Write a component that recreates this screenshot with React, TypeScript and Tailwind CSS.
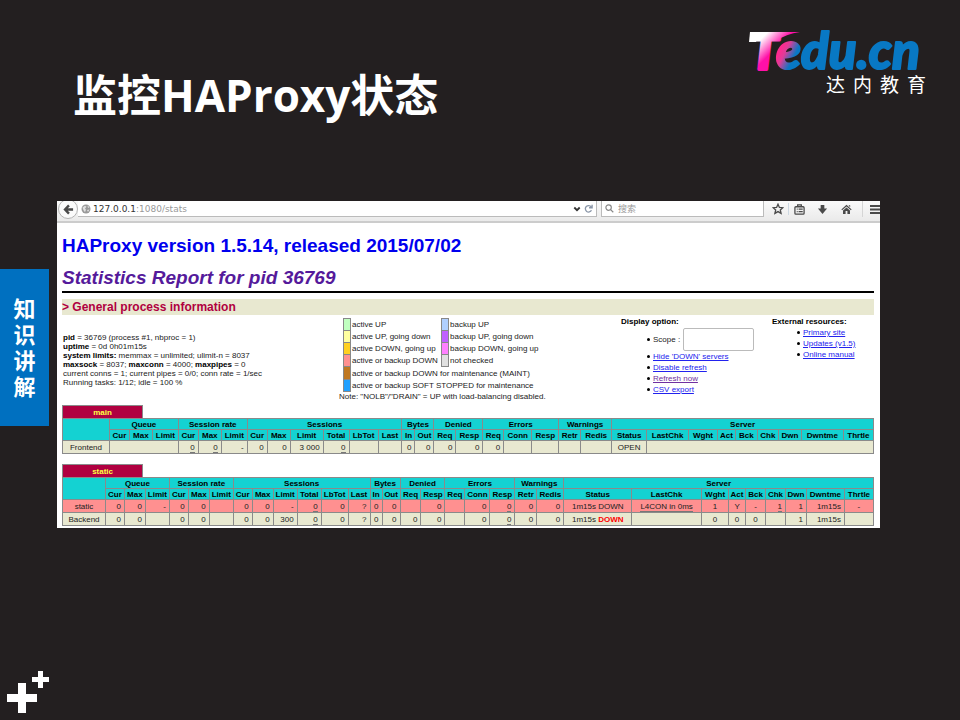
import React from "react";

type Cell = { t?: string; span?: number; align?: "l" | "c" | "r"; u?: boolean; alert?: string };

const groups: [string, number][] = [
  ["Queue", 3],
  ["Session rate", 3],
  ["Sessions", 6],
  ["Bytes", 2],
  ["Denied", 2],
  ["Errors", 3],
  ["Warnings", 2],
  ["Server", 9],
];

const heads = [
  "Cur", "Max", "Limit", "Cur", "Max", "Limit", "Cur", "Max", "Limit", "Total", "LbTot", "Last",
  "In", "Out", "Req", "Resp", "Req", "Conn", "Resp", "Retr", "Redis", "Status", "LastChk",
  "Wght", "Act", "Bck", "Chk", "Dwn", "Dwntme", "Thrtle",
];

const mainCols = [47, 20, 23, 26, 20, 23, 26, 20, 23, 33, 26, 29, 24, 13, 19, 22, 27, 21, 28, 27, 22, 31, 35, 42, 29, 18, 22, 21, 23, 42, 30];
const staticCols = [43, 19, 21, 24, 19, 21, 24, 19, 21, 24, 24, 27, 22, 12, 18, 21, 24, 20, 25, 25, 22, 27, 68, 70, 27, 17, 20, 20, 21, 38, 29];

const n = (t = ""): Cell => ({ t });
const u = (t: string): Cell => ({ t, u: true });
const c = (t = ""): Cell => ({ t, align: "c" });

const frontend: Cell[] = [
  { span: 3 }, u("0"), u("0"), n("-"), n("0"), n("0"), n("3 000"), u("0"), n(), n(),
  n("0"), n("0"), n("0"), n("0"), n("0"), n(), n(), n(), n(), c("OPEN"), { span: 8 },
];
const staticRow: Cell[] = [
  n("0"), n("0"), n("-"), n("0"), n("0"), n(), n("0"), n("0"), n("-"), u("0"), n("0"), n("?"),
  n("0"), n("0"), n(), n("0"), n(), n("0"), u("0"), n("0"), n("0"), c("1m15s DOWN"),
  { t: "L4CON in 0ms", u: true, align: "c" }, c("1"), c("Y"), c("-"), u("1"), n("1"), n("1m15s"), c("-"),
];
const backend: Cell[] = [
  n("0"), n("0"), n(), n("0"), n("0"), n(), n("0"), n("0"), n("300"), u("0"), n("0"), n("?"),
  n("0"), n("0"), n("0"), n("0"), n(), n("0"), u("0"), n("0"), n("0"),
  { t: "1m15s ", alert: "DOWN", align: "c" }, n(), c("0"), c("0"), c("0"), n(), n("1"), n("1m15s"), n(),
];

function ProxyTable({ name, cols, rows }: { name: string; cols: number[]; rows: { label: string; bg: string; cells: Cell[] }[] }) {
  const total = cols.reduce((a, b) => a + b, 0);
  return (
    <table className="w-full table-fixed border-collapse whitespace-nowrap text-center text-[8px] leading-[9px] text-[#222]">
      <caption className="text-left">
        <a href={"#" + name} className="block h-[13px] w-[10%] border border-b-0 border-[#8a8a8a] bg-[#b00040] text-center font-bold leading-[13px] text-[#ffff40]">
          {name}
        </a>
      </caption>
      <colgroup>
        {cols.map((w, i) => (
          <col key={i} style={{ width: (w / total) * 100 + "%" }} />
        ))}
      </colgroup>
      <thead className="bg-[#14d2d2] text-black">
        <tr className="h-[11px]">
          <th rowSpan={2} className="border border-[#8a8a8a] p-0"></th>
          {groups.map(([g, s]) => (
            <th key={g} colSpan={s} className="border border-[#8a8a8a] p-0">{g}</th>
          ))}
        </tr>
        <tr className="h-[11px]">
          {heads.map((h, i) => (
            <th key={i} className="border border-[#8a8a8a] p-0">
              <span className="flex justify-center">{h}</span>
            </th>
          ))}
        </tr>
      </thead>
      <tbody>
        {rows.map((r) => (
          <tr key={r.label} className={"h-[13px] " + r.bg}>
            <th className="border border-[#8a8a8a] p-0 font-normal">{r.label}</th>
            {r.cells.map((x, i) => (
              <td
                key={i}
                colSpan={x.span || 1}
                className={"border border-[#8a8a8a] py-0 " + (x.align === "c" ? "px-0 text-center" : "pl-0 pr-[3px] text-right")}
              >
                {x.u ? <span className="border-b border-[#777]">{x.t}</span> : x.t}
                {x.alert && <b className="text-[#f00]">{x.alert}</b>}
              </td>
            ))}
          </tr>
        ))}
      </tbody>
    </table>
  );
}

const legend: [string, string, string?, string?][] = [
  ["bg-[#c0ffc0]", "active UP", "bg-[#b0d0ff]", "backup UP"],
  ["bg-[#ffffa0]", "active UP, going down", "bg-[#c060ff]", "backup UP, going down"],
  ["bg-[#ffd020]", "active DOWN, going up", "bg-[#ff80ff]", "backup DOWN, going up"],
  ["bg-[#ff9090]", "active or backup DOWN", "bg-[#e0e0e0]", "not checked"],
  ["bg-[#c07820]", "active or backup DOWN for maintenance (MAINT)"],
  ["bg-[#20a0ff]", "active or backup SOFT STOPPED for maintenance"],
];

function Bullet({ children }: { children: React.ReactNode }) {
  return (
    <li className="flex items-center gap-[3px]">
      <span className="size-[3px] shrink-0 rounded-full bg-black" />
      {children}
    </li>
  );
}

function Toolbar() {
  const btn = "flex size-4 items-center justify-center text-[#4a4a4a]";
  return (
    <div className="flex h-[22px] items-start overflow-hidden border-b-2 border-[#ccc] bg-gradient-to-b from-[#fafafa] to-[#eaeaea]">
      <button aria-label="Back" className="-mt-[2px] ml-px flex size-5 shrink-0 items-center justify-center rounded-full border border-[#b4b4b4] bg-[#fbfbfb]">
        <svg viewBox="0 0 12 12" className="size-[11px]" fill="none" stroke="#4a4a4a" strokeWidth="2.6">
          <path d="M6.500 1.500 2.200 6l4.300 4.500M2.500 6H11" />
        </svg>
      </button>
      <div className="flex h-4 min-w-0 flex-1 items-center border-b border-r border-[#bbb] bg-white pl-[3px] pr-[3px] text-[9px] leading-[14px] [font-family:'DejaVu_Sans',sans-serif]">
        <svg viewBox="0 0 10 10" className="size-[10px] shrink-0">
          <circle cx="5" cy="5" r="4.5" fill="#999" />
          <path d="M1.500 3.500 4 1.800l1.500 1L4 4.500l1 1.200-1 2.500-1.500-2zM6.500 1.500l2 1.800L7 4zM6 6l2.500-.5L7 8z" fill="#e0e0e0" />
        </svg>
        <label htmlFor="address" className="ml-[2px] text-[#333]">127.0.0.1</label>
        <input id="address" defaultValue=":1080/stats" className="min-w-0 flex-1 bg-transparent text-[#999] outline-none" />
        <button aria-label="History" className="mr-[3px]">
          <svg viewBox="0 0 8 8" className="size-2" fill="none" stroke="#333" strokeWidth="1.8">
            <path d="m1.300 2.500 2.700 2.700 2.700-2.700" />
          </svg>
        </button>
        <button aria-label="Reload">
          <svg viewBox="0 0 10 10" className="size-[9px]" fill="none" stroke="#8a96a8" strokeWidth="1.5">
            <path d="M8 3.200A3.600 3.600 0 1 0 8.300 7M9 .8v3.400H5.600" />
          </svg>
        </button>
      </div>
      <div className="ml-1 flex h-4 w-[163px] shrink-0 items-center gap-1 border border-t-0 border-[#bbb] bg-white pl-[3px]">
        <svg viewBox="0 0 10 10" className="size-[9px]" fill="none" stroke="#888" strokeWidth="1.3">
          <circle cx="4" cy="4" r="3" />
          <path d="m6.200 6.200 3 3" />
        </svg>
        <input aria-label="搜索" placeholder="搜索" className="min-w-0 flex-1 bg-transparent text-[9px] leading-[14px] outline-none placeholder:text-[#999] [font-family:'Noto_Sans_CJK_SC',sans-serif]" />
      </div>
      <div className="flex w-[116px] shrink-0 items-center justify-between pl-[6px]">
        <div className="flex items-center gap-[2px]">
          <button aria-label="Bookmark" className={btn}>
            <svg viewBox="0 0 12 12" className="size-3" fill="none" stroke="currentColor" strokeWidth="1.3">
              <path d="m6 1.200 1.400 3.200 3.500.3-2.600 2.300.8 3.400L6 8.600l-3.100 1.800.8-3.400L1.100 4.700l3.500-.3z" />
            </svg>
          </button>
          <span className="h-3 w-px bg-[#cdd8e2]" />
          <button aria-label="Reading list" className={btn}>
            <svg viewBox="0 0 12 12" className="size-[11px]" fill="none" stroke="currentColor" strokeWidth="1.4">
              <rect x="1" y="3" width="10" height="8" rx="1" />
              <path d="M4 3V1h4v2M3 5.600h1M5 5.600h4.500M3 8.200h1M5 8.200h4.500" />
            </svg>
          </button>
        </div>
        <button aria-label="Downloads" className={btn}>
          <svg viewBox="0 0 12 12" className="size-[11px]" fill="currentColor">
            <path d="M4 1h4v4h3L6 11 1 5h3z" />
          </svg>
        </button>
        <button aria-label="Home" className={btn}>
          <svg viewBox="0 0 12 12" className="size-[11px]" fill="currentColor">
            <path d="M6 .8 11.600 6l-.8.8L6 2.600 1.200 6.800.4 6zM2.200 7 6 3.700 9.800 7v4H7V7.500H5V11H2.200zM8.500 1.300h1.500v2l-1.500-1.200z" />
          </svg>
        </button>
        <span className="h-4 w-px bg-[#d5d5d5]" />
        <button aria-label="Menu" className="flex h-4 w-[10px] items-center">
          <svg viewBox="0 0 10 9" className="h-[9px] w-[10px]" fill="#4a4a4a">
            <path d="M0 0h10v2H0zM0 3.500h10v2H0zM0 7h10v2H0z" />
          </svg>
        </button>
      </div>
    </div>
  );
}

function ProcessInfo() {
  return (
    <div className="grid grid-cols-[minmax(0,277fr)_minmax(0,282fr)_minmax(0,151fr)_minmax(0,102fr)] whitespace-nowrap pt-px text-[8px] leading-[9px] text-[#222]">
      <div className="pl-px pt-[17px]">
        <p><b className="text-black">pid</b> = 36769 (process #1, nbproc = 1)</p>
        <p><b className="text-black">uptime</b> = 0d 0h01m15s</p>
        <p><b className="text-black">system limits:</b> memmax = unlimited; ulimit-n = 8037</p>
        <p><b className="text-black">maxsock</b> = 8037; <b className="text-black">maxconn</b> = 4000; <b className="text-black">maxpipes</b> = 0</p>
        <p>current conns = 1; current pipes = 0/0; conn rate = 1/sec</p>
        <p>Running tasks: 1/12; idle = 100 %</p>
      </div>
      <div>
        <table className="ml-1 mt-[2px] h-[74px] border-collapse">
          <tbody>
            {legend.map(([a, at, b, bt]) => (
              <tr key={at}>
                <td className={"w-[7px] border border-[#888] p-0 " + a}></td>
                <td colSpan={b ? 1 : 3} className={"py-0 pl-px pr-0 " + (b ? "w-[91px]" : "")}>{at}</td>
                {b && <td className={"w-[7px] border border-[#888] p-0 " + b}></td>}
                {b && <td className="py-0 pl-px pr-0">{bt}</td>}
              </tr>
            ))}
          </tbody>
        </table>
        <p>Note: "NOLB"/"DRAIN" = UP with load-balancing disabled.</p>
      </div>
      <div className="leading-[11px]">
        <b className="block text-black">Display option:</b>
        <ul className="pl-[26px] pt-px">
          <Bullet>
            <label htmlFor="scope">Scope :</label>
            <input id="scope" className="h-[23px] w-[71px] rounded-[2px] border border-[#bbb] bg-white px-1" />
          </Bullet>
          <Bullet><a href="#down" className="text-[#22e] underline">Hide 'DOWN' servers</a></Bullet>
          <Bullet><a href="#norefresh" className="text-[#22e] underline">Disable refresh</a></Bullet>
          <Bullet><a href="#refresh" className="text-[#7030a0] underline">Refresh now</a></Bullet>
          <Bullet><a href="#csv" className="text-[#22e] underline">CSV export</a></Bullet>
        </ul>
      </div>
      <div className="leading-[11px]">
        <b className="block text-black">External resources:</b>
        <ul className="pl-[25px]">
          <Bullet><a href="#primary" className="text-[#22e] underline">Primary site</a></Bullet>
          <Bullet><a href="#updates" className="text-[#22e] underline">Updates (v1.5)</a></Bullet>
          <Bullet><a href="#manual" className="text-[#22e] underline">Online manual</a></Bullet>
        </ul>
      </div>
    </div>
  );
}

function Logo() {
  return (
    <div className="flex flex-col items-end text-white">
      <svg viewBox="0 0 180 44" className="h-11 w-[180px] overflow-visible" role="img" aria-label="Tedu.cn">
        <defs>
          <linearGradient id="tee" gradientUnits="userSpaceOnUse" x1="20" y1="6" x2="35" y2="21">
            <stop offset="0" stopColor="#fff" />
            <stop offset="0.800" stopColor="#ff10a8" />
          </linearGradient>
          <linearGradient id="word" gradientUnits="userSpaceOnUse" x1="34" y1="22" x2="54" y2="32">
            <stop offset="0" stopColor="#ff2a90" />
            <stop offset="0.250" stopColor="#e03c98" />
            <stop offset="0.700" stopColor="#0878c4" />
          </linearGradient>
        </defs>
        <path d="M26 4H54Q40 6 30 13H24z" fill="url(#tee)" />
        <path d="M4 4H14L10 14H3z" fill="#fff" />
        <text y="41" strokeLinejoin="round" className="font-black italic [font-family:Lato,sans-serif]">
          <tspan x="5" fontSize="48" strokeWidth="4" fill="url(#tee)" stroke="url(#tee)">T</tspan>
          <tspan x="30" fontSize="51" strokeWidth="2" fill="url(#word)" stroke="url(#word)">edu.cn</tspan>
        </text>
      </svg>
      <p className="flex gap-2 text-[19px] leading-[24px] [font-family:'Noto_Sans_CJK_SC',sans-serif]">
        <span>达</span><span>内</span><span>教</span><span>育</span>
      </p>
    </div>
  );
}

export default function App() {
  return (
    <div className="flex min-h-screen flex-col bg-[#231f20]">
      <header className="flex items-start justify-between pl-[73px] pr-[34px] pt-7">
        <h1 className="pt-[35px] text-[44px] font-bold leading-[64px] text-white [font-family:'Open_Sans','Noto_Sans_CJK_SC',sans-serif]">监控HAProxy状态</h1>
        <Logo />
      </header>
      <main className="flex items-start gap-2 pr-20 pt-[74px]">
        <aside className="mt-[68px] flex h-[157px] w-[49px] shrink-0 flex-col items-center justify-center bg-[#0070c0] pb-[3px] text-[22px] font-bold leading-[26px] text-white [font-family:'Noto_Sans_CJK_SC',sans-serif]">
          <p className="w-[22px] break-all">知识讲解</p>
        </aside>
        <section className="min-w-0 flex-1 bg-white [font-family:'Liberation_Sans',Arial,sans-serif]">
          <Toolbar />
          <div className="pb-[2px] pl-[5px] pr-[6px] pt-[11px]">
            <h2 className="text-[19px] font-bold leading-6"><a href="#haproxy" className="text-[#0000ee]">HAProxy version 1.5.14, released 2015/07/02</a></h2>
            <h2 className="mt-2 text-[19px] font-bold italic leading-6"><a href="#report" className="text-[#551a9b]">Statistics Report for pid 36769</a></h2>
            <hr className="mt-px border-t-2 border-black" />
            <h3 className="mt-[6px] bg-[#e8e8d0] text-[12px] font-bold leading-4 text-[#b00040]">&gt; General process information</h3>
            <ProcessInfo />
            <div className="mt-1 flex flex-col gap-[10px]">
              <ProxyTable name="main" cols={mainCols} rows={[{ label: "Frontend", bg: "bg-[#e8e8d0]", cells: frontend }]} />
              <ProxyTable
                name="static"
                cols={staticCols}
                rows={[
                  { label: "static", bg: "bg-[#ff9090]", cells: staticRow },
                  { label: "Backend", bg: "bg-[#e8e8d0]", cells: backend },
                ]}
              />
            </div>
          </div>
        </section>
      </main>
      <footer className="mt-auto pb-[7px] pl-[7px]">
        <svg viewBox="0 0 42 42" className="size-[42px]" fill="#fff">
          <path d="M11 12h8v11h11v8H19v11h-8V31H0v-8h11zM31 0h5v6h6v5h-6v6h-5v-6h-6V6h6z" />
        </svg>
      </footer>
    </div>
  );
}
